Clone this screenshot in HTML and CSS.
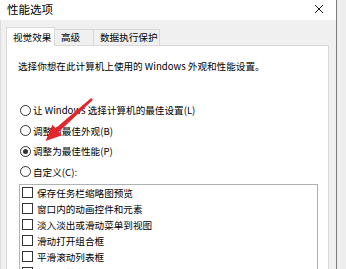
FILE: index.html
```html
<!DOCTYPE html>
<html lang="zh-CN">
<head>
<meta charset="utf-8">
<title>性能选项</title>
<link rel="stylesheet" href="styles.css">
</head>
<body>
<div class="screen">
  <div class="window">
    <div class="titlebar">
      <span class="title">性能选项</span>
      <svg class="close" width="10" height="10" viewBox="0 0 10 10"><path d="M1 1 L9 9 M9 1 L1 9" stroke="#1a1a1a" stroke-width="1" fill="none"/></svg>
    </div>
    <div class="dialog">
      <div class="tabs">
        <div class="tab active">视觉效果</div>
        <div class="tab t2">高级</div>
        <div class="tab t3">数据执行保护</div>
      </div>
      <div class="panel">
        <p class="intro">选择你想在此计算机上使用的 Windows 外观和性能设置。</p>
        <div class="radios">
          <div class="radio"><span class="circle"></span>让 Windows 选择计算机的最佳设置(L)</div>
          <div class="radio"><span class="circle"></span>调整为最佳外观(B)</div>
          <div class="radio"><span class="circle checked"></span>调整为最佳性能(P)</div>
          <div class="radio"><span class="circle"></span>自定义(C):</div>
        </div>
        <div class="list">
          <div class="item"><span class="box"></span>保存任务栏缩略图预览</div>
          <div class="item"><span class="box"></span>窗口内的动画控件和元素</div>
          <div class="item"><span class="box"></span>淡入淡出或滑动菜单到视图</div>
          <div class="item"><span class="box"></span>滑动打开组合框</div>
          <div class="item"><span class="box"></span>平滑滚动列表框</div>
          <div class="item"><span class="box"></span>平滑屏幕字体边缘</div>
        </div>
      </div>
    </div>
  </div>
  <div class="backdrop"></div>
  <svg class="arrow" width="346" height="269" viewBox="0 0 346 269">
    <polygon points="92.8,99.9 58.9,131.8 62.0,135.2 45.5,141 52.5,124.8 55.6,128.2 91.2,98.1" fill="#e3262b"/>
  </svg>
</div>
</body>
</html>
```

FILE: styles.css
```css
html, body {
  margin: 0;
  padding: 0;
}
body {
  font-family: "Noto Sans CJK SC", "Noto Sans", sans-serif;
  font-size: 9.6px;
  color: #000;
  background: #ececec;
}
.screen {
  position: relative;
  display: flex;
  width: 346px;
  height: 269px;
  overflow: hidden;
}
.window {
  width: 337px;
  box-sizing: border-box;
  border-right: 1px solid #7d7d7d;
  display: flex;
  flex-direction: column;
  height: 269px;
}
.backdrop {
  flex: 1;
  background: #eeeeee;
}
.titlebar {
  height: 20px;
  background: #fff;
  display: flex;
  align-items: center;
  justify-content: space-between;
  padding: 0 7px 2px 7px;
  box-sizing: border-box;
}
.title {
  font-size: 11.5px;
  line-height: 14px;
  color: #000;
}
.close {
  display: block;
  margin-right: 5px;
}
.dialog {
  flex: 1;
  background: #f0f0f0;
  border-left: 1px solid #dcdcdc;
  padding: 7px 0 0 5px;
  min-height: 0;
}
.tabs {
  display: flex;
  align-items: flex-end;
  height: 18px;
}
.tab {
  box-sizing: border-box;
  background: #f0f0f0;
  border-top: 1px solid #d9d9d9;
  border-right: 1px solid #d9d9d9;
  height: 16px;
  line-height: 14px;
  padding-left: 6px;
  white-space: nowrap;
}
.tab.active {
  position: relative;
  z-index: 1;
  background: #fff;
  border-left: 1px solid #d9d9d9;
  height: 19px;
  margin-bottom: -1px;
  padding-top: 2px;
  width: 49px;
}
.tab.t2 {
  width: 39px;
}
.tab.t3 {
  width: 66px;
}
.panel {
  width: 323px;
  box-sizing: border-box;
  background: #fff;
  border: 1px solid #d9d9d9;
  border-bottom: none;
  padding: 13px 0 0 11px;
  height: 230px;
}
.intro {
  margin: 0;
  line-height: 14px;
  white-space: nowrap;
}
.radios {
  margin-top: 27px;
  margin-left: 2px;
}
.radio {
  display: flex;
  align-items: center;
  height: 20.5px;
  white-space: nowrap;
}
.circle {
  box-sizing: border-box;
  width: 11px;
  height: 11px;
  border: 1px solid #333;
  border-radius: 50%;
  margin-right: 2px;
  display: flex;
  align-items: center;
  justify-content: center;
  flex: none;
}
.circle.checked::after {
  content: "";
  width: 5px;
  height: 5px;
  border-radius: 50%;
  background: #333;
}
.list {
  margin: 1.5px 10px 0 1px;
  border: 1px solid #adb2b5;
  border-bottom: none;
  height: 100px;
  padding-left: 2px;
}
.item {
  display: flex;
  align-items: center;
  height: 16px;
  white-space: nowrap;
}
.box {
  box-sizing: border-box;
  width: 11px;
  height: 11px;
  border: 1px solid #333;
  background: #fff;
  margin-right: 4px;
  flex: none;
}
.arrow {
  position: absolute;
  left: 0;
  top: 0;
  pointer-events: none;
}
```
